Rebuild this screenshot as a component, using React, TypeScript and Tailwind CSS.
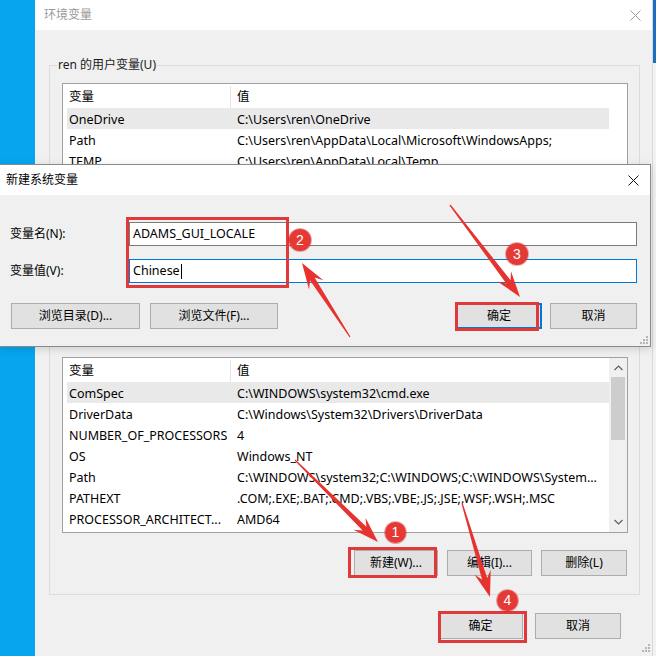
import React from 'react';

type Row = { name: string; value: string; selected?: boolean };

const USER_VARS: Row[] = [
  { name: 'OneDrive', value: 'C:\\Users\\ren\\OneDrive', selected: true },
  { name: 'Path', value: 'C:\\Users\\ren\\AppData\\Local\\Microsoft\\WindowsApps;' },
  { name: 'TEMP', value: 'C:\\Users\\ren\\AppData\\Local\\Temp' },
];

const SYSTEM_VARS: Row[] = [
  { name: 'ComSpec', value: 'C:\\WINDOWS\\system32\\cmd.exe', selected: true },
  { name: 'DriverData', value: 'C:\\Windows\\System32\\Drivers\\DriverData' },
  { name: 'NUMBER_OF_PROCESSORS', value: '4' },
  { name: 'OS', value: 'Windows_NT' },
  { name: 'Path', value: 'C:\\WINDOWS\\system32;C:\\WINDOWS;C:\\WINDOWS\\System...' },
  { name: 'PATHEXT', value: '.COM;.EXE;.BAT;.CMD;.VBS;.VBE;.JS;.JSE;.WSF;.WSH;.MSC' },
  { name: 'PROCESSOR_ARCHITECT...', value: 'AMD64' },
];

type Arrow = { from: [number, number]; to: [number, number] };

// annotation arrows, tail -> tip
const ARROWS: Arrow[] = [
  { from: [350, 337], to: [302, 263] },
  { from: [450, 205], to: [520, 297] },
  { from: [295, 460], to: [378, 542] },
  { from: [462, 503], to: [490, 597] },
];

const arrowPoints = ({ from, to }: Arrow) => {
  const [x1, y1] = from;
  const [x2, y2] = to;
  const len = Math.hypot(x2 - x1, y2 - y1);
  const dx = (x2 - x1) / len;
  const dy = (y2 - y1) / len;
  const nx = -dy;
  const ny = dx;
  const at = (d: number, w: number) =>
    `${(x2 - dx * d + nx * w).toFixed(1)},${(y2 - dy * d + ny * w).toFixed(1)}`;
  return [
    at(len, 0.6),
    at(19, 2.7),
    at(26, 8.5),
    at(0, 0),
    at(26, -8.5),
    at(19, -2.7),
    at(len, -0.6),
  ].join(' ');
};

const CloseX = ({ color }: { color: string }) => (
  <svg width="11" height="11" viewBox="0 0 11 11">
    <path d="M0.5 0.5 L10.5 10.5 M10.5 0.5 L0.5 10.5" stroke={color} strokeWidth="1" />
  </svg>
);

const Grip = () => (
  <svg width="8" height="8" viewBox="0 0 8 8" fill="#b5b5b5">
    <rect x="6" y="0" width="2" height="2" />
    <rect x="3" y="3" width="2" height="2" />
    <rect x="6" y="3" width="2" height="2" />
    <rect x="0" y="6" width="2" height="2" />
    <rect x="3" y="6" width="2" height="2" />
    <rect x="6" y="6" width="2" height="2" />
  </svg>
);

const Btn = ({ label, w, primary }: { label: string; w: string; primary?: boolean }) => (
  <div
    className={`${w} h-[26px] flex items-center justify-center bg-[#e1e1e1] text-black ${
      primary ? 'border-2 border-[#0078d7]' : 'border border-[#adadad]'
    }`}
  >
    {label}
  </div>
);

const Chevron = ({ up }: { up?: boolean }) => (
  <svg width="9" height="6" viewBox="0 0 9 6">
    <path
      d={up ? 'M0.5 5 L4.5 1 L8.5 5' : 'M0.5 1 L4.5 5 L8.5 1'}
      stroke="#606060"
      strokeWidth="1.2"
      fill="none"
    />
  </svg>
);

const VarList = ({ rows, scroll }: { rows: Row[]; scroll?: boolean }) => (
  <div className="h-[176px] border border-[#a0a0a0] bg-white flex overflow-hidden text-[12.5px]">
    <div className="flex-1 pl-[4px]">
      <div className="h-[24px] pt-[2px] flex">
        <div className="w-[164px] pl-[2px] border-r border-[#e5e5e5] flex items-center">变量</div>
        <div className="pl-[6px] flex items-center">值</div>
      </div>
      {rows.map((r) => (
        <div
          key={r.name}
          className={`h-[21px] pt-[3px] flex items-center whitespace-nowrap ${r.selected ? 'bg-[#e9e9e9]' : ''}`}
        >
          <div className="w-[164px] pl-[2px]">{r.name}</div>
          <div className="pl-[6px]">{r.value}</div>
        </div>
      ))}
    </div>
    {scroll ? (
      <div className="w-[18px] bg-[#f0f0f0] flex flex-col items-center">
        <div className="h-[19px] flex items-center justify-center">
          <Chevron up />
        </div>
        <div className="w-[14px] h-[63px] bg-[#cdcdcd]" />
        <div className="flex-1" />
        <div className="h-[20px] flex items-center justify-center">
          <Chevron />
        </div>
      </div>
    ) : (
      <div className="w-[18px]" />
    )}
  </div>
);

const GroupBox = ({ title, rows, scroll }: { title: string; rows: Row[]; scroll?: boolean }) => (
  <fieldset className="border border-[#dcdcdc]">
    <legend className="ml-[7px] px-[1px] leading-[16px] text-[#1a1a1a]">{title}</legend>
    <div className="pt-[10px] pl-[12px] pr-[11px] pb-[18px]">
      <VarList rows={rows} scroll={scroll} />
      <div className="mt-[17px] flex justify-end gap-[9px] pr-[1px]">
        <Btn label="新建(W)..." w="w-[84px]" />
        <Btn label="编辑(I)..." w="w-[85px]" />
        <Btn label="删除(L)" w="w-[86px]" />
      </div>
    </div>
  </fieldset>
);

const Badge = ({ n, className }: { n: number; className: string }) => (
  <div
    className={`absolute ${className} rounded-full bg-[#e53935] shadow-[0_0_0_1px_rgba(200,30,30,0.35)] text-white text-[14px] flex items-center justify-center font-['Liberation_Sans',sans-serif]`}
  >
    {n}
  </div>
);

const RedBox = ({ className }: { className: string }) => (
  <div className={`absolute ${className} border-[3px] border-[#e0393b] pointer-events-none`} />
);

export default function App() {
  return (
    <div className="relative w-[656px] h-[656px] overflow-hidden bg-[#05a6ee] text-[12px] text-black font-['Noto_Sans','Noto_Sans_CJK_SC',sans-serif]">
      {/* window behind, right edge */}
      <div className="absolute left-[652px] top-0 w-[4px] h-full bg-[#f2f2f2] border-l border-[#d8d8d8] flex flex-col">
        <div className="h-[63px] bg-[#1b6fc2]" />
      </div>

      {/* 环境变量 (inactive) */}
      <div className="absolute left-[35px] top-0 w-[617px] h-[700px] bg-[#f0f0f0] flex flex-col">
        <div className="h-[30px] bg-white flex items-center justify-between pl-[9px] pr-[11px]">
          <span className="text-[#9a9a9a]">环境变量</span>
          <CloseX color="#9a9a9a" />
        </div>
        <div className="pt-[27px] pl-[14px] pr-[12px] flex flex-col">
          <GroupBox title="ren 的用户变量(U)" rows={USER_VARS} />
          <div className="mt-[10px]">
            <GroupBox title="系统变量(S)" rows={SYSTEM_VARS} scroll />
          </div>
          <div className="mt-[18px] flex justify-end gap-[12px] pr-[19px]">
            <Btn label="确定" w="w-[85px]" />
            <Btn label="取消" w="w-[86px]" />
          </div>
        </div>
      </div>

      {/* 新建系统变量 (active) */}
      <div className="absolute left-[-1px] top-[164px] w-[652px] h-[183px] border border-[#8a8a8a] bg-[#f0f0f0] flex flex-col shadow-[0_2px_8px_rgba(0,0,0,0.15)]">
        <div className="h-[30px] bg-white flex items-center justify-between pl-[6px] pr-[11px]">
          <span>新建系统变量</span>
          <CloseX color="#111111" />
        </div>
        <div className="relative flex-1 pt-[27px] pl-[10px] pr-[13px]">
          <div className="flex items-center h-[24px]">
            <div className="w-[119px]">变量名(N):</div>
            <div className="flex-1 h-full bg-white border border-[#7a7a7a] pl-[3px] flex items-center text-[12.5px]">
              ADAMS_GUI_LOCALE
            </div>
          </div>
          <div className="mt-[13px] flex items-center h-[24px]">
            <div className="w-[119px]">变量值(V):</div>
            <div className="flex-1 h-full bg-white border border-[#0078d7] pl-[3px] flex items-center text-[12.5px]">
              Chinese
              <span className="ml-[1px] w-px h-[15px] bg-black" />
            </div>
          </div>
          <div className="mt-[20px] flex items-center pl-[1px]">
            <Btn label="浏览目录(D)..." w="w-[129px]" />
            <div className="ml-[10px]">
              <Btn label="浏览文件(F)..." w="w-[128px]" />
            </div>
            <div className="flex-1" />
            <Btn label="确定" w="w-[86px]" primary />
            <div className="ml-[8px]">
              <Btn label="取消" w="w-[87px]" />
            </div>
          </div>
          <div className="absolute right-[2px] bottom-[2px]">
            <Grip />
          </div>
        </div>
      </div>

      {/* annotations */}
      <RedBox className="left-[126px] top-[217px] w-[163px] h-[71px]" />
      <RedBox className="left-[455px] top-[302px] w-[84px] h-[29px]" />
      <RedBox className="left-[348px] top-[547px] w-[89px] h-[31px]" />
      <RedBox className="left-[438px] top-[611px] w-[89px] h-[32px]" />

      <svg className="absolute left-0 top-0 pointer-events-none" width="656" height="656">
        {ARROWS.map((a, i) => (
          <polygon key={i} points={arrowPoints(a)} fill="#e6332f" />
        ))}
      </svg>

      <Badge n={2} className="left-[289px] top-[229px] w-[22px] h-[22px]" />
      <Badge n={3} className="left-[506px] top-[243px] w-[22px] h-[22px]" />
      <Badge n={1} className="left-[385px] top-[522px] w-[21px] h-[21px]" />
      <Badge n={4} className="left-[497px] top-[590px] w-[21px] h-[21px]" />

      <div className="absolute left-[642px] bottom-[4px]">
        <Grip />
      </div>
    </div>
  );
}
